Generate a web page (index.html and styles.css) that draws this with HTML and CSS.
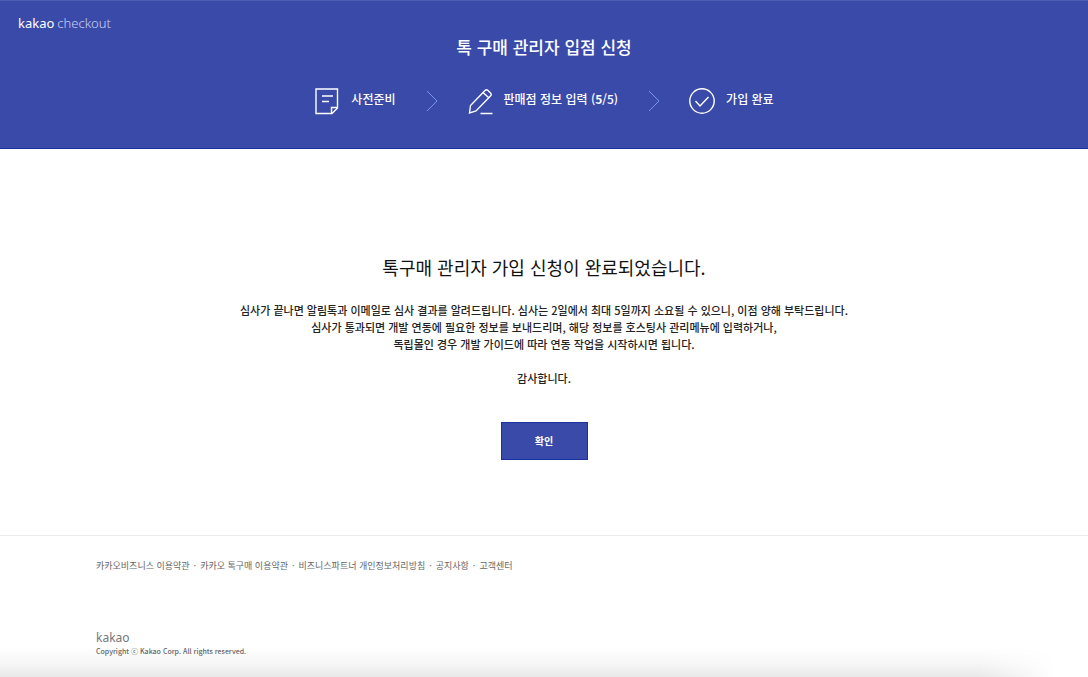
FILE: index.html
```html
<!DOCTYPE html>
<html lang="ko">
<head>
<meta charset="utf-8">
<meta name="viewport" content="width=device-width, initial-scale=1">
<title>톡 구매 관리자 입점 신청</title>
<link rel="stylesheet" href="styles.css">
</head>
<body>
<header class="header">
  <a class="logo" href="#"><span class="logo-brand">kakao</span><span class="logo-product">checkout</span></a>
  <h1 class="title">톡 구매 관리자 입점 신청</h1>
  <ol class="steps">
    <li class="step">
      <svg class="step-icon" viewBox="0 0 28 28" aria-hidden="true"><path d="M2 2h21.500v19l-5.500 5.500h-16zM23.500 20.500h-6v6M8 9h11M8 14.500h7"/></svg>
      <span>사전준비</span>
    </li>
    <li class="arrow" aria-hidden="true"><svg viewBox="0 0 12 22"><path d="M1 1l10 10-10 10"/></svg></li>
    <li class="step">
      <svg class="step-icon" viewBox="0 0 28 28" aria-hidden="true"><path d="M2.500 26l1-7.500 14.500-15q1.500-1.500 3 0l2.500 2.500q1.500 1.500 0 3l-14.500 15zM16 5.500l6 5.500M13.500 26.500h12"/></svg>
      <span>판매점 정보 입력 (<b>5</b>/5)</span>
    </li>
    <li class="arrow" aria-hidden="true"><svg viewBox="0 0 12 22"><path d="M1 1l10 10-10 10"/></svg></li>
    <li class="step">
      <svg class="step-icon" viewBox="0 0 28 28" aria-hidden="true"><circle cx="13" cy="14" r="12.200"/><path d="M6.500 14l4.500 5 8.500-9"/></svg>
      <span>가입 완료</span>
    </li>
  </ol>
</header>
<main class="main">
  <h2 class="headline">톡구매 관리자 가입 신청이 완료되었습니다.</h2>
  <p class="message">심사가 끝나면 알림톡과 이메일로 심사 결과를 알려드립니다. 심사는 2일에서 최대 5일까지 소요될 수 있으니, 이점 양해 부탁드립니다.<br>심사가 통과되면 개발 연동에 필요한 정보를 보내드리며, 해당 정보를 호스팅사 관리메뉴에 입력하거나,<br>독립몰인 경우 개발 가이드에 따라 연동 작업을 시작하시면 됩니다.</p>
  <p class="message">감사합니다.</p>
  <button class="confirm" type="button">확인</button>
</main>
<footer class="footer">
  <ul class="links">
    <li><a href="#">카카오비즈니스 이용약관</a></li>
    <li><a href="#">카카오 톡구매 이용약관</a></li>
    <li><a href="#">비즈니스파트너 개인정보처리방침</a></li>
    <li><a href="#">공지사항</a></li>
    <li><a href="#">고객센터</a></li>
  </ul>
  <div class="footer-logo">kakao</div>
  <small class="copyright">Copyright ⓒ Kakao Corp. All rights reserved.</small>
  <div class="shade"></div>
</footer>
</body>
</html>
```
FILE: styles.css
```css
* { box-sizing: border-box; }
body {
  margin: 0;
  min-height: 100vh;
  display: flex;
  flex-direction: column;
  background: #fff;
  color: #111;
  font-family: "Noto Sans CJK KR", sans-serif;
}
h1, h2, p, ol, ul { margin: 0; padding: 0; }
ol, ul { list-style: none; }
a { color: inherit; text-decoration: none; }

.header {
  padding: 12px 18px 33px;
  background: #394aa9;
  border-top: 1px solid #4e5db3;
  border-bottom: 1px solid #1c31a0;
  color: #fff;
}
.logo {
  display: flex;
  gap: 3px;
  font-family: "Noto Sans", sans-serif;
  font-size: 13px;
  line-height: 20px;
}
.logo-product { color: #c9d0f2; font-weight: 300; }
.title {
  font-size: 17px;
  line-height: 28px;
  font-weight: 500;
  text-align: center;
}
.steps {
  display: flex;
  justify-content: center;
  align-items: center;
  margin-top: 26px;
}
.step {
  display: flex;
  align-items: center;
  gap: 9px;
  font-size: 12px;
  line-height: 24px;
  font-weight: 500;
}
.step span { padding-bottom: 4px; }
.step b { font-weight: 700; }
.step-icon { width: 28px; height: 28px; }
.step-icon, .arrow svg {
  display: block;
  fill: none;
  stroke: #fff;
  stroke-width: 1.4;
}
.arrow { padding: 0 29px 0 30px; }
.arrow svg { width: 12px; height: 22px; stroke: #7896e8; stroke-width: 1; }

.main {
  flex: 1;
  display: flex;
  flex-direction: column;
  align-items: center;
  padding: 104px 20px 74px;
  text-align: center;
}
.headline {
  margin-bottom: 21px;
  font-size: 18px;
  line-height: 28px;
  font-weight: 400;
}
.message {
  margin-bottom: 17px;
  font-size: 11px;
  line-height: 17px;
  font-weight: 500;
  color: #222;
}
.confirm {
  width: 87px;
  height: 38px;
  margin-top: 18px;
  padding: 0;
  border: 1px solid #1c31a0;
  background: #394aa9;
  color: #fff;
  font: 700 10px/18px "Noto Sans CJK KR", sans-serif;
}

.footer {
  position: relative;
  padding: 22px 96px 20px;
  border-top: 1px solid #ebebeb;
  color: #666;
}
.links {
  display: flex;
  flex-wrap: wrap;
  margin-bottom: 57px;
  font-size: 9px;
  line-height: 16px;
}
.links li + li::before { content: "·"; margin: 0 4px; }
.footer-logo {
  font-family: "Noto Sans", sans-serif;
  font-size: 12px;
  line-height: 14px;
  color: #777;
}
.copyright {
  display: block;
  font-size: 7px;
  line-height: 12px;
  font-weight: 500;
}
.shade {
  position: absolute;
  inset: auto 0 0;
  height: 30px;
  background: linear-gradient(to top, #00000016, #00000008 50%, transparent);
  mask-image: linear-gradient(to right, #000 90%, transparent 97%);
  pointer-events: none;
}
```
